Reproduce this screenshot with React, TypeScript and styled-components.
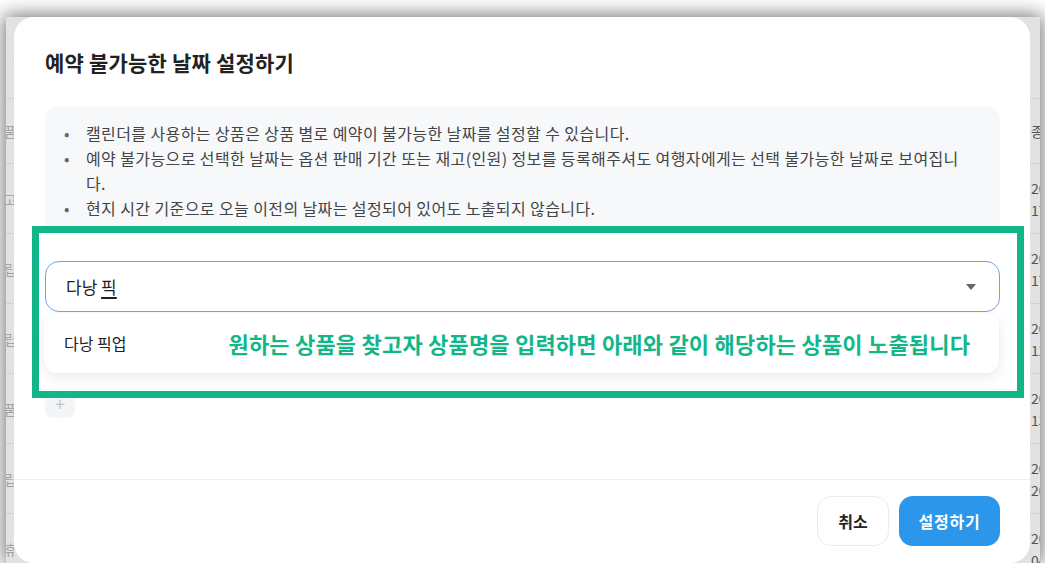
import React from "react";
import styled, {createGlobalStyle} from "styled-components";

const GlobalStyle = createGlobalStyle`
  html, body {
    margin: 0;
    padding: 0;
    background: #fff;
  }
  body {
    font-family: "Noto Sans CJK KR", "Noto Sans", sans-serif;
    color: #222;
  }
  * {
    box-sizing: border-box;
  }
`

const Frame = styled.div`
  display: flex;
  width: 1034px;
  height: 546px;
  margin: 17px 0 0 6px;
  background: #e2e2e2;
  box-shadow: 0 0 18px 2px rgba(0, 0, 0, .55);
`

const Strip = styled.div<{ $side: 'left' | 'right' }>`
  flex: 0 0 ${p => p.$side === 'left' ? 8 : 10}px;
  overflow: hidden;
  display: flex;
  flex-direction: column;
  font-size: 14px;
  line-height: 22px;
  color: ${p => p.$side === 'left' ? '#a3a3a3' : '#555'};
`

const StripCell = styled.div<{ $side: 'left' | 'right'; $height: number; $line?: boolean }>`
  flex: 0 0 ${p => p.$height}px;
  display: flex;
  flex-direction: column;
  justify-content: center;
  align-items: ${p => p.$side === 'left' ? 'flex-end' : 'flex-start'};
  white-space: nowrap;
  border-top: ${p => p.$line ? '1px solid #d2d2d2' : 'none'};
  padding-left: ${p => p.$side === 'left' ? 0 : 1}px;
  > span {
    margin-right: ${p => p.$side === 'left' ? '-3px' : '0'};
  }
`

const Modal = styled.div`
  flex: 0 0 1016px;
  display: flex;
  flex-direction: column;
  background: #fff;
  border-radius: 20px;
`

const Title = styled.h2`
  margin: 0;
  padding: 31px 31px 0;
  font-size: 21px;
  line-height: 28px;
  letter-spacing: .2px;
  font-weight: 700;
  color: #222;
`

const Body = styled.div`
  flex: 1;
  display: flex;
  flex-direction: column;
  align-items: stretch;
  padding: 31px 30px 0 31px;
`

const Notice = styled.ul`
  margin: 0;
  padding: 14px 8px 14px 0;
  list-style: none;
  background: #f7f8fa;
  border-radius: 12px;
`

const NoticeItem = styled.li`
  display: flex;
  font-size: 16px;
  line-height: 25px;
  letter-spacing: .4px;
  color: #444;
  word-break: keep-all;
`

const Dot = styled.span`
  flex: 0 0 41px;
  padding-left: 3px;
  text-align: center;
  color: #666;
`

const Highlight = styled.div`
  position: relative;
  z-index: 1;
  margin: -9px -24px 0 -13px;
  padding: 28px 17px 18px 6px;
  border: 7px solid #13b689;
  background: #fff;
`

const SelectBox = styled.div`
  display: flex;
  align-items: center;
  justify-content: space-between;
  height: 51px;
  padding: 0 23px 0 20px;
  border: 1px solid #6ba6e6;
  border-radius: 14px;
  font-size: 17px;
  color: #1f1f1f;
`

const Composing = styled.span`
  text-decoration: underline;
  text-underline-offset: 3px;
  text-decoration-thickness: 1.5px;
`

const Menu = styled.div`
  display: flex;
  align-items: center;
  height: 60px;
  margin: 1px 1px 0 -1px;
  padding: 0 20px;
  background: #fff;
  border-radius: 12px;
  box-shadow: 0 5px 14px rgba(0, 0, 0, .08), 0 0 2px rgba(0, 0, 0, .06);
`

const Option = styled.span`
  font-size: 16px;
  color: #222;
`

const Note = styled.span`
  margin-left: 102px;
  font-size: 22px;
  letter-spacing: .2px;
  font-weight: 700;
  color: #13b689;
  white-space: nowrap;
`

const AddButton = styled.button`
  display: flex;
  align-items: center;
  justify-content: center;
  width: 30px;
  height: 30px;
  margin-top: -10px;
  padding: 0;
  border: 0;
  border-radius: 8px;
  background: #f4f5f7;
  color: #c6c6c6;
  font-family: inherit;
  font-size: 18px;
`

const Footer = styled.div`
  display: flex;
  justify-content: flex-end;
  gap: 10px;
  padding: 16px 30px 17px;
  border-top: 1px solid #efefef;
`

const Button = styled.button<{ $primary?: boolean }>`
  height: 50px;
  width: ${p => p.$primary ? 101 : 72}px;
  padding: 0;
  border-radius: 14px;
  border: ${p => p.$primary ? 'none' : '1px solid #ececec'};
  background: ${p => p.$primary ? '#2b96ea' : '#fff'};
  color: ${p => p.$primary ? '#fff' : '#222'};
  font-family: inherit;
  font-size: 16px;
  letter-spacing: ${p => p.$primary ? '.8px' : '0'};
  font-weight: 700;
`

const leftCells = ['상품', '최고', '출립', '출립', '상품', '출립', '휴']
const rightRows: string[][] = [
    ['2023-', '17:00'],
    ['2023-', '17:30'],
    ['2023-', '12:00'],
    ['2023-', '13:00'],
    ['2023-', '20:00'],
    ['2023-', '04:00'],
]

const BackdropColumn = ({side}: { side: 'left' | 'right' }) => {
    if (side === 'left') {
        return (
            <Strip $side="left">
                <StripCell $side="left" $height={81}><span>›</span></StripCell>
                {leftCells.map((text, index) =>
                    <StripCell key={index} $side="left" $height={index === 0 ? 65 : 70} $line>
                        <span>{text}</span>
                    </StripCell>
                )}
            </Strip>
        )
    }
    return (
        <Strip $side="right">
            <StripCell $side="right" $height={81}/>
            <StripCell $side="right" $height={65} $line><span>종류</span></StripCell>
            {rightRows.map((lines, index) =>
                <StripCell key={index} $side="right" $height={70} $line>
                    {lines.map(line => <span key={line}>{line}</span>)}
                </StripCell>
            )}
        </Strip>
    )
}

const App = () => {
    return (
        <>
            <GlobalStyle/>
            <Frame>
                <BackdropColumn side="left"/>
                <Modal>
                    <Title>예약 불가능한 날짜 설정하기</Title>
                    <Body>
                        <Notice>
                            <NoticeItem>
                                <Dot>•</Dot>
                                <span>캘린더를 사용하는 상품은 상품 별로 예약이 불가능한 날짜를 설정할 수 있습니다.</span>
                            </NoticeItem>
                            <NoticeItem>
                                <Dot>•</Dot>
                                <span>예약 불가능으로 선택한 날짜는 옵션 판매 기간 또는 재고(인원) 정보를 등록해주셔도 여행자에게는 선택 불가능한 날짜로 보여집니<br/>다.</span>
                            </NoticeItem>
                            <NoticeItem>
                                <Dot>•</Dot>
                                <span>현지 시간 기준으로 오늘 이전의 날짜는 설정되어 있어도 노출되지 않습니다.</span>
                            </NoticeItem>
                        </Notice>
                        <Highlight>
                            <SelectBox>
                                <span>다낭 <Composing>픽</Composing></span>
                                <svg width="10" height="6" viewBox="0 0 10 6">
                                    <path d="M0 0h10L5 6z" fill="#666"/>
                                </svg>
                            </SelectBox>
                            <Menu>
                                <Option>다낭 픽업</Option>
                                <Note>원하는 상품을 찾고자 상품명을 입력하면 아래와 같이 해당하는 상품이 노출됩니다</Note>
                            </Menu>
                        </Highlight>
                        <AddButton>+</AddButton>
                    </Body>
                    <Footer>
                        <Button>취소</Button>
                        <Button $primary>설정하기</Button>
                    </Footer>
                </Modal>
                <BackdropColumn side="right"/>
            </Frame>
        </>
    );
}

export default App;
